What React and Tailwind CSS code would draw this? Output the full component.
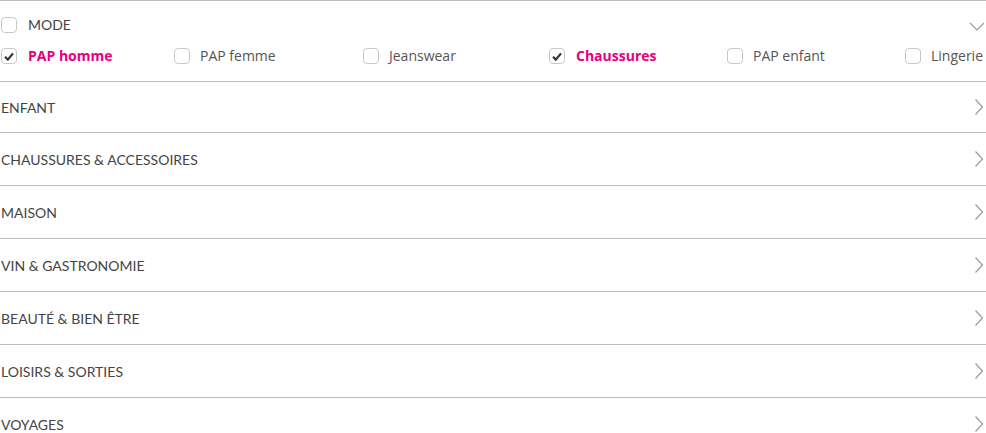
import React from "react";

const subs = [
  { label: "PAP homme", checked: true, w: "w-[173px]" },
  { label: "PAP femme", checked: false, w: "w-[189px]" },
  { label: "Jeanswear", checked: false, w: "w-[186px]" },
  { label: "Chaussures", checked: true, w: "w-[178px]" },
  { label: "PAP enfant", checked: false, w: "w-[178px]" },
  { label: "Lingerie", checked: false, w: "w-[81px]" },
];

const categories = [
  "ENFANT",
  "CHAUSSURES & ACCESSOIRES",
  "MAISON",
  "VIN & GASTRONOMIE",
  "BEAUTÉ & BIEN ÊTRE",
  "LOISIRS & SORTIES",
  "VOYAGES",
];

const Box = ({ checked }) => (
  <span className="flex h-4 w-4 shrink-0 items-center justify-center rounded-[4px] border border-[#c8c8c8] bg-white">
    {checked && (
      <svg width="10" height="9" viewBox="0 0 10 9">
        <path d="M1 4.8 L3.8 7.6 L9 1.4" fill="none" stroke="#333" strokeWidth="2.2" />
      </svg>
    )}
  </span>
);

const ChevronRight = () => (
  <svg width="10" height="18" viewBox="0 0 10 18" className="shrink-0">
    <path d="M1.5 1.5 L8.5 9 L1.5 16.5" fill="none" stroke="#9a9a9a" strokeWidth="1.2" />
  </svg>
);

export default function App() {
  return (
    <div className="w-[986px] bg-white font-['Lato',sans-serif] text-[#444]">
      {/* Mode */}
      <div className="border-t border-[#bbb] pt-4 pb-[17px]">
        <div className="flex items-center pl-px pr-px">
          <Box />
          <span className="ml-[11px] text-[14px] leading-4">MODE</span>
          <svg width="16" height="9" viewBox="0 0 16 9" className="ml-auto mt-[3px]">
            <path d="M1 1 L8 8 L15 1" fill="none" stroke="#9a9a9a" strokeWidth="1.2" />
          </svg>
        </div>
        <div className="mt-[15px] flex items-center pl-px font-['Open_Sans',sans-serif] text-[14px] leading-4">
          {subs.map((s) => (
            <label key={s.label} className={`flex shrink-0 items-center ${s.w}`}>
              <Box checked={s.checked} />
              <span
                className={
                  s.checked
                    ? "ml-[11px] font-bold text-[#e5007d]"
                    : "ml-[10px] text-[#555]"
                }
              >
                {s.label}
              </span>
            </label>
          ))}
        </div>
      </div>

      {/* Categories */}
      {categories.map((c, i) => (
        <div
          key={c}
          className={`flex items-center justify-between border-t border-[#bbb] pl-px pr-[2px] ${
            i === 0 ? "h-[51px]" : "h-[53px]"
          }`}
        >
          <span className="text-[14px]">{c}</span>
          <ChevronRight />
        </div>
      ))}
    </div>
  );
}
